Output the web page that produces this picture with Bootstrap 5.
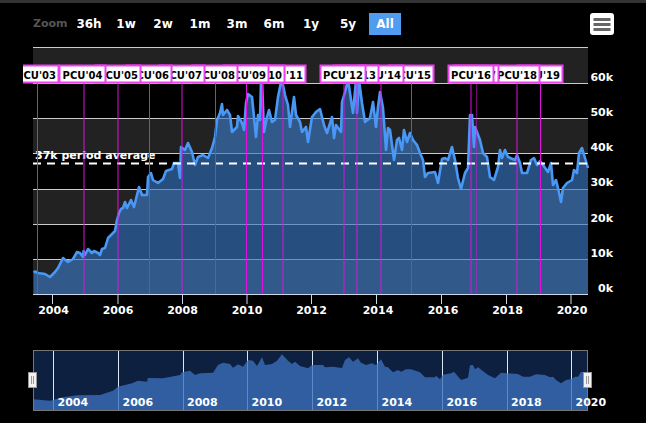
<!DOCTYPE html>
<html lang="en">
<head>
<meta charset="utf-8">
<title>Chart</title>
<link href="https://cdn.jsdelivr.net/npm/bootstrap@5.3.0/dist/css/bootstrap.min.css" rel="stylesheet">
<style>
html,body{background:#000;margin:0;height:423px;overflow:hidden}
.page-wrap{border-top:3px solid #333;font-family:"DejaVu Sans",Verdana,sans-serif}
.tool-row{height:44px;padding:10px 32px 12px 33px}
.rng-group{gap:5px}
.zoom-lbl{width:35px;color:#555;font-size:11px;font-weight:700;line-height:22px}
.rng-btn{width:32px;height:22px;padding:0;border:0;border-radius:0;color:#fff;font-size:12px;font-weight:700;line-height:22px;background:transparent}
.rng-btn.active,.rng-btn.active:hover{background:#4f9cf0;color:#fff}
.menu-btn{width:24px;height:22px;padding:0;border:0;border-radius:3px;background:#fff;line-height:0}
.plot-svg{display:block}
.plot-svg text{font-family:"DejaVu Sans",Verdana,sans-serif;font-weight:700;fill:#fff}
.ax{font-size:11px}
.flg rect{fill:#fff;stroke:#f03ff0;stroke-width:2}
.flg text{font-size:10px;fill:#000;text-anchor:middle}
.evt path{stroke:#e010e0;stroke-width:1;fill:none}
</style>
</head>
<body>
<div class="page-wrap">
  <div class="tool-row d-flex align-items-start">
    <div class="rng-group d-flex align-items-center">
      <span class="zoom-lbl">Zoom</span>
      <button type="button" class="btn rng-btn">36h</button>
      <button type="button" class="btn rng-btn">1w</button>
      <button type="button" class="btn rng-btn">2w</button>
      <button type="button" class="btn rng-btn">1m</button>
      <button type="button" class="btn rng-btn">3m</button>
      <button type="button" class="btn rng-btn">6m</button>
      <button type="button" class="btn rng-btn">1y</button>
      <button type="button" class="btn rng-btn">5y</button>
      <button type="button" class="btn rng-btn active">All</button>
    </div>
    <button type="button" class="btn menu-btn ms-auto" aria-label="Menu">
      <svg width="24" height="22" viewBox="0 0 24 22"><path d="M3.5 6.5h17M3.5 11.500h17M3.500 16.500h17" stroke="#666" stroke-width="3" fill="none"/></svg>
    </button>
  </div>
  <svg class="plot-svg" width="646" height="376" viewBox="0 47 646 376" xmlns="http://www.w3.org/2000/svg">
    <defs><clipPath id="plotclip"><rect x="23" y="47" width="600" height="260"/></clipPath></defs>
    <path fill="#222" d="M33 47.500h555V83.500H33zM33 118.500h555V153.500H33zM33 189.500h555V224.500H33zM33 259.500h555V294.500H33z"/>
    <path stroke="#ccc" stroke-width="1" fill="none" d="M33 47.500H588M33 83.500H588M33 118.500H588M33 153.500H588M33 189.500H588M33 224.500H588M33 259.500H588"/>
    <path fill="#3a7ac4" fill-opacity=".65" d="M33.500 294.500V272.500L35 271.500L38 273L45 274L50 277L55 272L58 268L63 258L68 262L73 259L77 252L80 253L83 257L83.500 251L85 255L88 249L92 253L94 251L98 253L100 255L102 249L105 248L108 238L115 231L117 220L119 213L121 209L123 208L125 202L127 208L131 200L134 207L139 187L142 195L147 195L148 177L151 173L153 180L158 183L163 179L166 171L172 169L174 163L178 163L180 178L181 147L185 150L188 143L192 152L195 165L198 157L203 155L208 158L212 148L215 137L217 120L220 113L222 104L223 115L227 110L230 115L232 132L237 127L238 116L242 123L244 130L246 103L248 94L252 97L254 117L256 137L258 115L260 120L261 80L262 80L264 132L267 117L269 110L272 122L275 120L278 97L281 82L282 80L285 95L288 105L290 127L294 97L296 115L300 122L302 132L306 127L308 142L312 117L316 112L320 109L324 125L327 133L332 117L334 138L336 125L341 132L342 102L345 92L348 80L350 93L353 113L356 80L357 113L359 80L362 103L365 122L370 118L373 102L376 127L378 107L380 92L383 108L386 150L388 128L390 130L394 160L397 140L399 138L402 150L404 130L407 142L410 133L413 140L417 145L420 153L423 160L425 177L428 173L435 172L438 183L442 159L445 158L448 160L452 147L455 160L458 178L461 189L465 173L468 168L470 115L472 115L474 147L475 127L480 140L483 153L487 157L490 177L494 180L498 167L500 150L502 158L505 150L508 157L515 160L517 155L520 163L522 173L527 173L531 160L534 158L537 165L540 161L543 165L548 172L551 163L553 185L556 180L558 188L561 202L563 188L567 183L572 180L574 170L577 173L579 153L582 148L585 158L588 168V294.500Z"/>
    <path fill="none" stroke="#4a98f5" stroke-width="2.6" stroke-linejoin="round" d="M33.500 272.500L35 271.500L38 273L45 274L50 277L55 272L58 268L63 258L68 262L73 259L77 252L80 253L83 257L83.500 251L85 255L88 249L92 253L94 251L98 253L100 255L102 249L105 248L108 238L115 231L117 220L119 213L121 209L123 208L125 202L127 208L131 200L134 207L139 187L142 195L147 195L148 177L151 173L153 180L158 183L163 179L166 171L172 169L174 163L178 163L180 178L181 147L185 150L188 143L192 152L195 165L198 157L203 155L208 158L212 148L215 137L217 120L220 113L222 104L223 115L227 110L230 115L232 132L237 127L238 116L242 123L244 130L246 103L248 94L252 97L254 117L256 137L258 115L260 120L261 80L262 80L264 132L267 117L269 110L272 122L275 120L278 97L281 82L282 80L285 95L288 105L290 127L294 97L296 115L300 122L302 132L306 127L308 142L312 117L316 112L320 109L324 125L327 133L332 117L334 138L336 125L341 132L342 102L345 92L348 80L350 93L353 113L356 80L357 113L359 80L362 103L365 122L370 118L373 102L376 127L378 107L380 92L383 108L386 150L388 128L390 130L394 160L397 140L399 138L402 150L404 130L407 142L410 133L413 140L417 145L420 153L423 160L425 177L428 173L435 172L438 183L442 159L445 158L448 160L452 147L455 160L458 178L461 189L465 173L468 168L470 115L472 115L474 147L475 127L480 140L483 153L487 157L490 177L494 180L498 167L500 150L502 158L505 150L508 157L515 160L517 155L520 163L522 173L527 173L531 160L534 158L537 165L540 161L543 165L548 172L551 163L553 185L556 180L558 188L561 202L563 188L567 183L572 180L574 170L577 173L579 153L582 148L585 158L588 168"/>
    <path stroke="#fff" stroke-width="2" stroke-dasharray="8 6" fill="none" d="M33 163.500H588"/>
    <text x="35" y="159" font-size="11">37k period average</text>
    <g class="evt"><path d="M37.500 83V294M84 83V294M118 83V294M149.500 83V294M182 83V294M215.500 83V294M246.500 83V294M262.500 83V294M283 83V294M344 83V294M357 83V294M381 83V294M411.500 83V294M471 83V294M517 83V294M540.500 83V294"/><path opacity=".5" d="M476.500 83V294"/></g>
    <path stroke="#ccd6eb" stroke-width="1" fill="none" d="M33 294.500H588M52.500 294V304M118 294V304M182.500 294V304M247 294V304M311.500 294V304M376.500 294V304M441.500 294V304M506.500 294V304M571 294V304"/>
    <g class="ax" text-anchor="middle">
      <text x="53.500" y="314">2004</text><text x="118" y="314">2006</text><text x="182.500" y="314">2008</text><text x="247" y="314">2010</text><text x="311.500" y="314">2012</text><text x="378" y="314">2014</text><text x="443" y="314">2016</text><text x="507.500" y="314">2018</text><text x="572" y="314">2020</text>
    </g>
    <g class="ax" text-anchor="end">
      <text x="613" y="81">60k</text><text x="613" y="116">50k</text><text x="613" y="151">40k</text><text x="613" y="186">30k</text><text x="613" y="222">20k</text><text x="613" y="257">10k</text><text x="613" y="292">0k</text>
    </g>
    <g class="flg" clip-path="url(#plotclip)">
      <rect x="517.500" y="65.500" width="45" height="17"/><text x="540" y="78.500">PCU'19</text>
      <rect x="494.500" y="65.500" width="45" height="17"/><text x="517" y="78.500">PCU'18</text>
      <rect x="453.500" y="65.500" width="45" height="17"/><text x="476" y="78.500">PCU'17</text>
      <rect x="448.500" y="65.500" width="45" height="17"/><text x="471" y="78.500">PCU'16</text>
      <rect x="388.500" y="65.500" width="45" height="17"/><text x="411" y="78.500">PCU'15</text>
      <rect x="358.500" y="65.500" width="45" height="17"/><text x="381" y="78.500">PCU'14</text>
      <rect x="333.500" y="65.500" width="45" height="17"/><text x="356" y="78.500">PCU'13</text>
      <rect x="320.500" y="65.500" width="45" height="17"/><text x="343" y="78.500">PCU'12</text>
      <rect x="260.500" y="65.500" width="45" height="17"/><text x="283" y="78.500">PCU'11</text>
      <rect x="239.500" y="65.500" width="45" height="17"/><text x="262" y="78.500">PCU'10</text>
      <rect x="223.500" y="65.500" width="45" height="17"/><text x="246" y="78.500">PCU'09</text>
      <rect x="192.500" y="65.500" width="45" height="17"/><text x="215" y="78.500">PCU'08</text>
      <rect x="159.500" y="65.500" width="45" height="17"/><text x="182" y="78.500">PCU'07</text>
      <rect x="126.500" y="65.500" width="45" height="17"/><text x="149" y="78.500">PCU'06</text>
      <rect x="95.500" y="65.500" width="45" height="17"/><text x="118" y="78.500">PCU'05</text>
      <rect x="59.500" y="65.500" width="46" height="17"/><text x="82.500" y="78.500">PCU'04</text>
      <rect x="13.500" y="65.500" width="45" height="17"/><text x="36" y="78.500">PCU'03</text>
    </g>
    <rect x="33.500" y="350.500" width="554" height="60" fill="#0e2040"/>
    <path stroke="#dde6f5" stroke-width="1" fill="none" d="M53.500 351V410M118.500 351V410M183.500 351V410M247.500 351V410M312.500 351V410M377.500 351V410M442.500 351V410M507.500 351V410M571.500 351V410"/>
    <path fill="#3a70bc" fill-opacity=".78" d="M33.500 410V399.300L50 400.700L63 397.300L77 395.300L100 395L113 390.700L118 386.700L132 383.300L138 380.700L147 381.700L148 378L163 378.300L180 375L182 372.300L190 370.700L195 375L200 373.300L213 372.700L218 365L223 362.700L230 364L233 367.700L238 364.300L243 366.700L248 360L253 360.700L257 366L262 357.300L265 365L272 364L277 360.700L282 354.300L288 360.700L292 364L295 361.700L300 366L308 368.300L312 365L323 365L325 367.300L333 366.700L342 368L345 360L349 357.300L353 361.700L358 358.300L361 362.700L366 365L372 363.300L376 365L381 359.300L385 366.700L388 367.300L393 372.300L398 370L401 371.700L406 369.300L411 369.300L420 372.300L425 377.300L435 377.300L436 375.700L440 379.300L443 374.700L451 373.300L454 371.700L461 380L468 377.700L470 365.300L473 365L475 369.300L478 367.300L488 375L495 378.300L501 372.700L518 374L523 376.700L530 376.700L536 374.300L545 375L550 377.300L553 376.700L556 380L561 383.300L566 380L571 379.300L575 376.700L578 376.700L581 372L587.500 372.300V410Z"/>
    <rect x="33.500" y="350.500" width="554" height="60" fill="none" stroke="#777"/>
    <g class="ax">
      <text x="57.500" y="406">2004</text><text x="122.500" y="406">2006</text><text x="187" y="406">2008</text><text x="251.500" y="406">2010</text><text x="316.500" y="406">2012</text><text x="381.500" y="406">2014</text><text x="446.500" y="406">2016</text><text x="511" y="406">2018</text><text x="575.500" y="406">2020</text>
    </g>
    <g fill="#f2f2f2" stroke="#999">
      <rect x="28.500" y="372.500" width="8" height="15"/>
      <rect x="583.500" y="372.500" width="8" height="15"/>
      <path fill="none" d="M31.500 376V384M33.500 376V384M586.500 376V384M588.500 376V384"/>
    </g>
  </svg>
</div>
<script src="https://cdn.jsdelivr.net/npm/bootstrap@5.3.0/dist/js/bootstrap.bundle.min.js"></script>
</body>
</html>
